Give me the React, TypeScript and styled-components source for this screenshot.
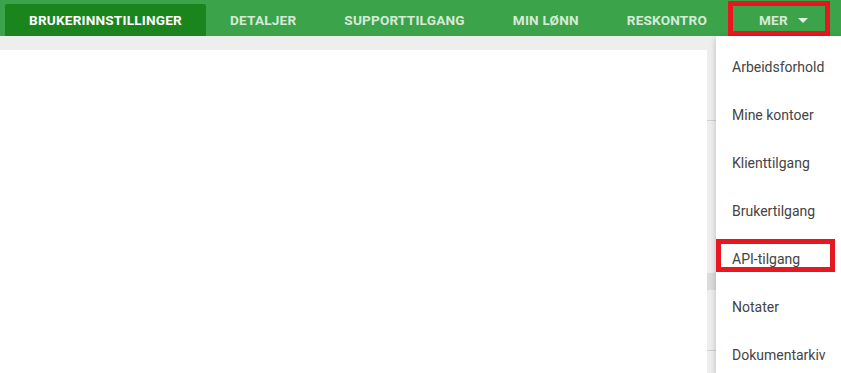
import React from "react";
import styled, { createGlobalStyle } from "styled-components";

const Global = createGlobalStyle`
  html, body { margin: 0; padding: 0; height: 100%; overflow: hidden; }
  body { font-family: Roboto, "Noto Sans", Arial, sans-serif; background: #eeeeee; }
  #root { height: 100%; }
`;

const Page = styled.div`
  position: relative;
  width: 841px;
  height: 373px;
  display: flex;
  flex-direction: column;
  background: #eeeeee;
  overflow: hidden;
`;

const Nav = styled.nav`
  height: 36px;
  flex: none;
  display: flex;
  align-items: flex-end;
  padding-left: 5px;
  background: #3ba34a;
`;

const Tab = styled.div<{ $active?: boolean }>`
  position: relative;
  height: 32px;
  display: flex;
  align-items: center;
  gap: 10px;
  padding: 0 24px 1px;
  box-sizing: border-box;
  font-size: 13.6px;
  font-weight: 700;
  letter-spacing: 0.2px;
  text-transform: uppercase;
  white-space: nowrap;
  border-radius: 2px 2px 0 0;
  color: ${(p) => (p.$active ? "#ffffff" : "rgba(255,255,255,0.8)")};
  background: ${(p) => (p.$active ? "#1b851d" : "transparent")};
`;

const MerTab = styled(Tab)`
  padding: 0 24px 1px 28px;
`;

const Caret = styled.span`
  width: 0;
  height: 0;
  border-left: 5px solid transparent;
  border-right: 5px solid transparent;
  border-top: 5px solid rgba(255,255,255,0.85);
  margin-top: 2px;
`;

const Highlight = styled.div<{ $top: number; $left: number; $w: number; $h: number }>`
  position: absolute;
  top: ${(p) => p.$top}px;
  left: ${(p) => p.$left}px;
  width: ${(p) => p.$w}px;
  height: ${(p) => p.$h}px;
  box-sizing: border-box;
  border: 5px solid #e8161e;
  pointer-events: none;
`;

const Body = styled.div`
  flex: 1;
  display: grid;
  grid-template-columns: 707px 1fr;
  padding-top: 14px;
`;

const Panel = styled.div`
  background: #ffffff;
`;

const Gutter = styled.div`
  position: relative;
`;

const Rule = styled.div<{ $top: number; $h: number; $shade: string }>`
  position: absolute;
  left: 0;
  width: 9px;
  top: ${(p) => p.$top}px;
  height: ${(p) => p.$h}px;
  background: ${(p) => p.$shade};
`;

const Menu = styled.ul`
  position: absolute;
  top: 36px;
  left: 716px;
  right: 0;
  bottom: 0;
  margin: 0;
  padding: 7px 0 0;
  list-style: none;
  background: #ffffff;
  box-shadow: 0 2px 6px rgba(0, 0, 0, 0.22);
`;

const Item = styled.li`
  position: relative;
  height: 48px;
  display: flex;
  align-items: center;
  padding-left: 16px;
  font-size: 14px;
  color: #444444;
  white-space: nowrap;
`;

const tabs = ["Detaljer", "Supporttilgang", "Min lønn", "Reskontro"];
const items = [
  "Arbeidsforhold",
  "Mine kontoer",
  "Klienttilgang",
  "Brukertilgang",
  "API-tilgang",
  "Notater",
  "Dokumentarkiv",
];

export default function App() {
  return (
    <Page>
      <Global />
      <Nav>
        <Tab $active>Brukerinnstillinger</Tab>
        {tabs.map((t) => (
          <Tab key={t}>{t}</Tab>
        ))}
        <MerTab>
          Mer
          <Caret />
          <Highlight $top={-3} $left={-3} $w={102} $h={35} />
        </MerTab>
      </Nav>
      <Body>
        <Panel />
        <Gutter>
          <Rule $top={70} $h={1} $shade="#d0d0d0" />
          <Rule $top={223} $h={17} $shade="#dcdcdc" />
          <Rule $top={300} $h={1} $shade="#d0d0d0" />
        </Gutter>
      </Body>
      <Menu>
        {items.map((it) => (
          <Item key={it}>
            {it}
            {it === "API-tilgang" && <Highlight $top={4} $left={0} $w={119} $h={33} />}
          </Item>
        ))}
      </Menu>
    </Page>
  );
}
